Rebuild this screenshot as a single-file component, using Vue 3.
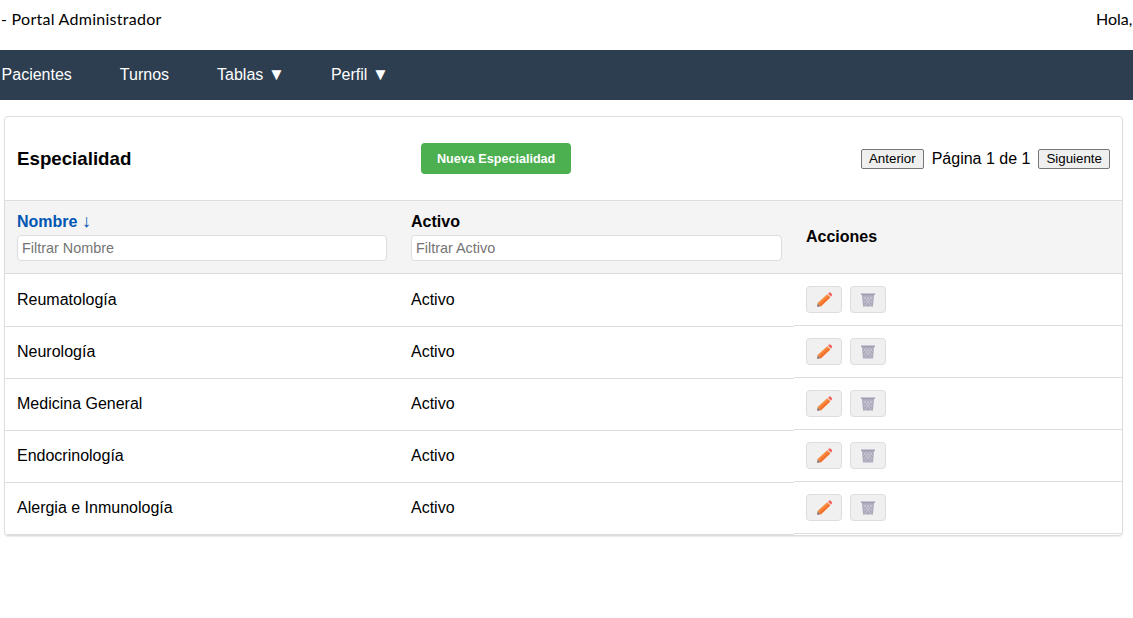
<template>
  <div class="page">
    <header class="top-bar">
      <span class="portal">- Portal Administrador</span>
      <span class="hello">Hola,</span>
    </header>

    <nav class="nav-bar">
      <a v-for="item in menu" :key="item.label" class="nav-item">
        {{ item.label }}<span v-if="item.caret" class="caret"> ▼</span>
      </a>
    </nav>

    <main class="content">
      <section class="table-card">
        <div class="card-header">
          <h2 class="card-title">Especialidad</h2>
          <button class="btn-new">Nueva Especialidad</button>
          <div class="pager">
            <button class="btn-page">Anterior</button>
            <span>Página 1 de 1</span>
            <button class="btn-page">Siguiente</button>
          </div>
        </div>

        <div class="table-head">
          <div class="head-cell">
            <div class="head-label sorted">Nombre <span class="arrow">↓</span></div>
            <input class="filter" placeholder="Filtrar Nombre" />
          </div>
          <div class="head-cell">
            <div class="head-label">Activo</div>
            <input class="filter" placeholder="Filtrar Activo" />
          </div>
          <div class="head-cell head-actions">Acciones</div>
        </div>

        <div v-for="row in rows" :key="row" class="table-row">
          <div class="cell">{{ row }}</div>
          <div class="cell">Activo</div>
          <div class="cell cell-actions">
            <button class="btn-icon">
              <svg width="18" height="18" viewBox="0 -0.5 18 18">
                <path d="M2 16.6 L2.6 12.4 L6 15.8 Z" fill="#9a7a68" />
                <path d="M2.6 12.4 L12.2 3.8 L15.2 7 L6 15.8 Z" fill="#f98a3c" />
                <path d="M4.3 14.1 L13.7 5.4 L15.2 7 L6 15.8 Z" fill="#f4722e" />
                <path d="M12.2 3.8 L13.1 3 L16 6.1 L15.2 7 Z" fill="#f7c3b0" />
                <path d="M13.1 3 L14.3 2 Q15 1.6 15.7 2.3 L16.9 3.5 Q17.4 4.3 16.9 5 L16 6.1 Z" fill="#f4605c" />
              </svg>
            </button>
            <button class="btn-icon">
              <svg width="18" height="18" viewBox="0 -0.5 18 18">
                <path d="M3 4.5 H15 L14 16 H4 Z" fill="#aeaabd" />
                <path d="M5 6 L12 15 M8 6 L13 12.5 M11 6 L13.5 9 M13 6 L6 15 M10 6 L5 12.5 M7 6 L4.6 9" stroke="#d3d0dc" stroke-width="0.7" fill="none" />
                <rect x="2" y="3" width="14" height="1.5" fill="#a29eb2" />
              </svg>
            </button>
          </div>
        </div>
      </section>
    </main>
  </div>
</template>

<script setup>
const menu = [
  { label: 'Pacientes' },
  { label: 'Turnos' },
  { label: 'Tablas', caret: true },
  { label: 'Perfil', caret: true }
]

const rows = [
  'Reumatología',
  'Neurología',
  'Medicina General',
  'Endocrinología',
  'Alergia e Inmunología'
]
</script>

<style>
html,
body {
  overflow: hidden;
  background: #fff;
}
</style>

<style scoped>
.page {
  width: 1133px;
  height: 618px;
  overflow: hidden;
  font-family: "Liberation Sans", Arial, sans-serif;
  font-size: 16px;
  color: #000;
}

.top-bar {
  height: 50px;
  box-sizing: border-box;
  padding: 9px 0 0 1px;
  display: flex;
  justify-content: space-between;
  font-family: Lato, "Open Sans", sans-serif;
  line-height: 19px;
  white-space: nowrap;
}

.portal {
  letter-spacing: 0.27px;
}

.hello {
  width: 37px;
  overflow: hidden;
}

.nav-bar {
  height: 50px;
  background: #2c3e50;
  display: flex;
  align-items: center;
  gap: 48px;
  padding-left: 1.6px;
}

.nav-item {
  color: #fff;
  white-space: nowrap;
}

.caret {
  font-size: 17px;
  margin-right: -2px;
}

.content {
  padding: 16px 10px 0 4px;
}

.table-card {
  border: 1px solid #ddd;
  border-radius: 4px;
  box-shadow: 0 1px 1px rgba(0, 0, 0, 0.08);
  overflow: hidden;
}

.card-header {
  height: 84px;
  box-sizing: border-box;
  padding: 0 12px;
  display: flex;
  justify-content: space-between;
  align-items: center;
  border-bottom: 1px solid #ddd;
}

.card-title {
  margin: 0;
  font-size: 18.72px;
  font-weight: 700;
}

.btn-new {
  width: 150px;
  height: 31px;
  border: none;
  border-radius: 4px;
  background: #4caf50;
  color: #fff;
  font-family: inherit;
  font-size: 12.6px;
  font-weight: 700;
}

.pager {
  display: flex;
  align-items: center;
  gap: 8px;
}

.btn-page {
  height: 20px;
  padding: 0 7px;
  border: 1px solid #767676;
  border-radius: 2px;
  background: #efefef;
  color: #000;
  font-family: inherit;
  font-size: 13.33px;
}

.table-head,
.table-row {
  display: grid;
  grid-template-columns: 394px 395px 1fr;
}

.table-head {
  height: 73px;
  box-sizing: border-box;
  background: #f4f4f4;
  border-bottom: 1px solid #ddd;
}

.head-cell {
  padding: 11px 12px 0;
  font-weight: 700;
}

.head-label {
  line-height: 19px;
  margin-bottom: 4px;
}

.sorted {
  color: #0056b3;
}

.arrow {
  font-weight: 400;
  font-size: 18px;
  line-height: 18px;
}

.head-actions {
  padding-top: 27px;
}

.filter {
  display: block;
  width: 100%;
  height: 26px;
  box-sizing: border-box;
  padding: 0 4px;
  border: 1px solid #ddd;
  border-radius: 4px;
  background: #fff;
  font-family: inherit;
  font-size: 14.4px;
}

.filter::placeholder {
  color: #757575;
}

/* rows keep a 52px pitch; the cell borders hang 1px into the next row */
.table-row {
  height: 52px;
  align-items: start;
}

.table-row:last-child {
  height: 53px;
}

.cell {
  height: 53px;
  box-sizing: border-box;
  padding: 0 12px 1px;
  display: flex;
  align-items: center;
  border-bottom: 1px solid #ddd;
}

.cell-actions {
  height: 52px;
  gap: 8px;
}

.btn-icon {
  width: 36px;
  height: 27px;
  padding: 0;
  display: flex;
  align-items: center;
  justify-content: center;
  border: 1px solid #ddd;
  border-radius: 4px;
  background: #f0f0f0;
}
</style>
